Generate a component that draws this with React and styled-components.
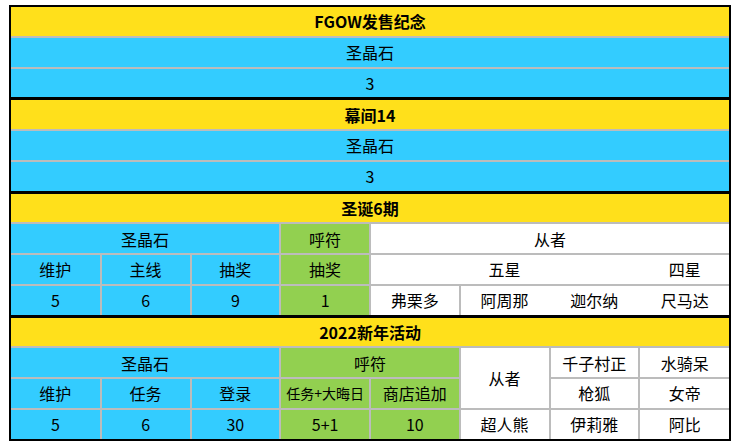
import React from "react";
import styled, { createGlobalStyle, css } from "styled-components";

const GlobalStyle = createGlobalStyle`
  html, body { margin: 0; padding: 0; background: #ffffff; }
`;

const tones = {
  yellow: "#ffe01b",
  blue: "#33ccff",
  green: "#92d050",
  white: "#ffffff",
};

const Page = styled.div`
  padding: 5px 0 0 9px;
`;

const Frame = styled.div`
  width: 718px;
  border: 2px solid #000;
`;

const Sheet = styled.table`
  width: 718px;
  border-collapse: collapse;
  border-style: hidden;
  table-layout: fixed;
  font-family: "Noto Sans CJK SC", "Microsoft YaHei", sans-serif;
  font-size: 16px;
  color: #000;
`;

const Col = styled.col`
  width: 89.75px;
`;

const Row = styled.tr``;

const Cell = styled.td`
  height: 28.75px;
  padding: 0;
  text-align: center;
  vertical-align: middle;
  white-space: nowrap;
  line-height: 1;
  border: 2px solid #bcbcbc;
  background: ${(p) => tones[p.$tone || "white"]};
  ${(p) => p.$small && css`font-size: 14px;`}
  ${(p) => p.$openRight && css`border-right-color: #ffffff;`}
`;

const Title = styled(Cell).attrs({ colSpan: 8, $tone: "yellow" })`
  font-weight: 700;
  border-top: 3px solid #000;
`;

const Full = styled(Cell).attrs({ colSpan: 8, $tone: "blue" })``;

export default function App() {
  return (
    <>
      <GlobalStyle />
      <Page>
        <Frame>
          <Sheet>
            <colgroup>
              {Array.from({ length: 8 }).map((_, i) => (
                <Col key={i} />
              ))}
            </colgroup>
            <tbody>
              <Row><Title>FGOW发售纪念</Title></Row>
              <Row><Full>圣晶石</Full></Row>
              <Row><Full>3</Full></Row>

              <Row><Title>幕间14</Title></Row>
              <Row><Full>圣晶石</Full></Row>
              <Row><Full>3</Full></Row>

              <Row><Title>圣诞6期</Title></Row>
              <Row>
                <Cell $tone="blue" colSpan={3}>圣晶石</Cell>
                <Cell $tone="green">呼符</Cell>
                <Cell colSpan={4}>从者</Cell>
              </Row>
              <Row>
                <Cell $tone="blue">维护</Cell>
                <Cell $tone="blue">主线</Cell>
                <Cell $tone="blue">抽奖</Cell>
                <Cell $tone="green">抽奖</Cell>
                <Cell colSpan={3} $openRight>五星</Cell>
                <Cell>四星</Cell>
              </Row>
              <Row>
                <Cell $tone="blue">5</Cell>
                <Cell $tone="blue">6</Cell>
                <Cell $tone="blue">9</Cell>
                <Cell $tone="green">1</Cell>
                <Cell>弗栗多</Cell>
                <Cell $openRight>阿周那</Cell>
                <Cell $openRight>迦尔纳</Cell>
                <Cell>尺马达</Cell>
              </Row>

              <Row><Title>2022新年活动</Title></Row>
              <Row>
                <Cell $tone="blue" colSpan={3}>圣晶石</Cell>
                <Cell $tone="green" colSpan={2}>呼符</Cell>
                <Cell rowSpan={2}>从者</Cell>
                <Cell>千子村正</Cell>
                <Cell>水骑呆</Cell>
              </Row>
              <Row>
                <Cell $tone="blue">维护</Cell>
                <Cell $tone="blue">任务</Cell>
                <Cell $tone="blue">登录</Cell>
                <Cell $tone="green" $small>任务+大晦日</Cell>
                <Cell $tone="green">商店追加</Cell>
                <Cell>枪狐</Cell>
                <Cell>女帝</Cell>
              </Row>
              <Row>
                <Cell $tone="blue">5</Cell>
                <Cell $tone="blue">6</Cell>
                <Cell $tone="blue">30</Cell>
                <Cell $tone="green">5+1</Cell>
                <Cell $tone="green">10</Cell>
                <Cell>超人熊</Cell>
                <Cell>伊莉雅</Cell>
                <Cell>阿比</Cell>
              </Row>
            </tbody>
          </Sheet>
        </Frame>
      </Page>
    </>
  );
}
